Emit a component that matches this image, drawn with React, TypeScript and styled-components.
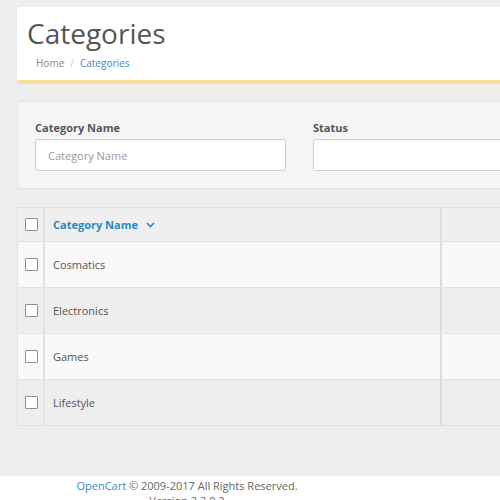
import React, { FC } from 'react';
import styled, { createGlobalStyle } from 'styled-components';

const GlobalStyle = createGlobalStyle`
  html, body {
    margin: 0;
    padding: 0;
    overflow: hidden;
    background: #ffffff;
  }
  body {
    font-family: 'Open Sans', 'Noto Sans', sans-serif;
    font-size: 11px;
    color: #666;
  }
`;

const Page = styled.div`
  background: #eeeeee;
  padding: 7px 0 50px 17px;
  width: 620px;
`;

// header
const HeaderCard = styled.div`
  background: #fff;
  padding: 9px 10px 8px 10px;
  border-bottom: 3px solid #f8df98;
  border-radius: 3px 0 0 3px;
  box-shadow: 0 1px 2px rgba(0, 0, 0, 0.06);
`;

const Title = styled.h1`
  margin: 0;
  font-size: 28px;
  line-height: 34px;
  font-weight: 400;
  color: #565656;
`;

const Crumbs = styled.div`
  display: flex;
  gap: 6px;
  margin: 4px 0 0 9px;
  line-height: 18px;
  font-size: 10px;
`;

const Crumb = styled.span<{ $active?: boolean }>`
  color: ${(p) => (p.$active ? '#3a8cc4' : '#888')};
`;

const Sep = styled.span`
  color: #ccc;
`;

// filter
const FilterPanel = styled.div`
  margin-top: 18px;
  background: #f5f5f5;
  border: 1px solid #e4e4e4;
  border-radius: 3px 0 0 3px;
  padding: 17px 0 17px 17px;
  display: grid;
  grid-template-columns: 251px 1fr;
  column-gap: 27px;
`;

const Field = styled.div`
  display: flex;
  flex-direction: column;
`;

const Label = styled.label`
  font-weight: 700;
  font-size: 11px;
  line-height: 18px;
  color: #555;
  margin-bottom: 2px;
`;

const Input = styled.input`
  box-sizing: border-box;
  height: 32px;
  width: 100%;
  border: 1px solid #cfcfcf;
  border-radius: 3px;
  background: #fff;
  padding: 0 12px;
  font-family: inherit;
  font-size: 11px;
  color: #555;
  outline: none;
  &::placeholder {
    color: #999;
  }
`;

// table
const Table = styled.div`
  margin-top: 18px;
  border: 1px solid #e0e0e0;
  border-right: none;
`;

const Row = styled.div<{ $shade: 'head' | 'light' | 'dark' }>`
  display: grid;
  grid-template-columns: 27px 395px 1fr;
  height: ${(p) => (p.$shade === 'head' ? '33px' : '45px')};
  background: ${(p) =>
    p.$shade === 'light' ? '#f9f9f9' : p.$shade === 'dark' ? '#eeeeee' : '#efefef'};
  border-top: ${(p) => (p.$shade === 'head' ? 'none' : '1px solid #e2e2e2')};
`;

const Cell = styled.div<{ $check?: boolean }>`
  display: flex;
  align-items: center;
  padding-left: ${(p) => (p.$check ? '7px' : '8px')};
  border-right: ${(p) => (p.$check ? '2px solid #e2e2e2' : 'none')};
  color: #555;
  font-size: 11px;
`;

const Filler = styled.div`
  border-left: 2px solid #dcdcdc;
`;

const Box = styled.span`
  display: inline-block;
  width: 11px;
  height: 11px;
  border: 1px solid #8f8f8f;
  background: #fff;
  border-radius: 1px;
`;

const SortLink = styled.a`
  display: flex;
  align-items: center;
  gap: 8px;
  color: #1e8bc9;
  font-weight: 700;
  text-decoration: none;
`;

// footer
const Footer = styled.footer`
  width: 374px;
  text-align: center;
  padding-top: 2px;
  line-height: 15px;
  font-size: 11px;
  color: #666;
`;

const FooterLink = styled.a`
  color: #3a8cc4;
  text-decoration: none;
`;

const categories = ['Cosmatics', 'Electronics', 'Games', 'Lifestyle'];

const App: FC = () => (
  <>
    <GlobalStyle />
    <Page>
      <HeaderCard>
        <Title>Categories</Title>
        <Crumbs>
          <Crumb>Home</Crumb>
          <Sep>/</Sep>
          <Crumb $active>Categories</Crumb>
        </Crumbs>
      </HeaderCard>

      <FilterPanel>
        <Field>
          <Label>Category Name</Label>
          <Input placeholder="Category Name" />
        </Field>
        <Field>
          <Label>Status</Label>
          <Input />
        </Field>
      </FilterPanel>

      <Table>
        <Row $shade="head">
          <Cell $check>
            <Box />
          </Cell>
          <Cell>
            <SortLink href="#">
              Category Name
              <svg width="9" height="6" viewBox="0 0 9 6">
                <path d="M1 1l3.5 3.5L8 1" fill="none" stroke="#1e8bc9" strokeWidth="1.6" />
              </svg>
            </SortLink>
          </Cell>
          <Filler />
        </Row>
        {categories.map((name, i) => (
          <Row key={name} $shade={i % 2 === 0 ? 'light' : 'dark'}>
            <Cell $check>
              <Box />
            </Cell>
            <Cell>{name}</Cell>
            <Filler />
          </Row>
        ))}
      </Table>
    </Page>
    <Footer>
      <FooterLink href="#">OpenCart</FooterLink> &copy; 2009-2017 All Rights Reserved.
      <br />
      Version 2.3.0.2
    </Footer>
  </>
);

export default App;
